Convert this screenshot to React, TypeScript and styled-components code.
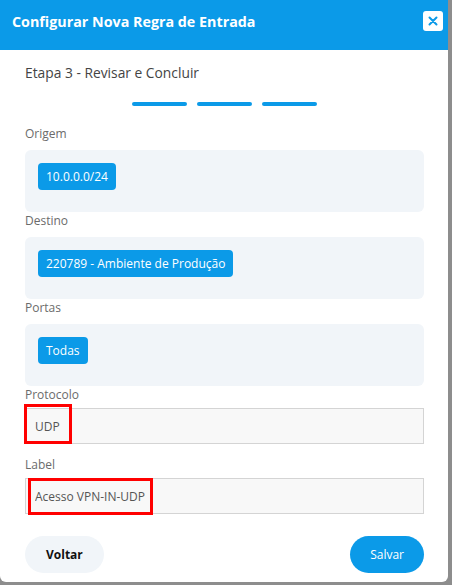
import React from 'react';
import styled, { createGlobalStyle } from 'styled-components';

const blue = '#0b9ae8';

const GlobalStyle = createGlobalStyle`
  html, body {
    margin: 0;
    padding: 0;
    background: #8d8d8d;
    font-family: 'Open Sans', 'Noto Sans', Arial, sans-serif;
  }
  * {
    box-sizing: border-box;
  }
`;

const StyledModal = styled.div`
  width: 448px;
  height: 582px;
  display: flex;
  flex-direction: column;
  background: #fff;
  border-radius: 0 0 6px 6px;
  overflow: hidden;
`;

const StyledHeader = styled.header`
  height: 50px;
  flex-shrink: 0;
  display: flex;
  align-items: center;
  justify-content: space-between;
  padding: 0 5px 8px 12px;
  background: ${blue};
`;

const StyledTitle = styled.h2`
  margin: 0;
  font-size: 14.3px;
  font-weight: 700;
  color: #fff;
`;

const CloseButton = styled.button`
  width: 20px;
  height: 20px;
  display: flex;
  align-items: center;
  justify-content: center;
  padding: 0;
  border: none;
  border-radius: 3px;
  background: #fff;
  color: ${blue};
  cursor: pointer;
`;

const StyledBody = styled.div`
  flex: 1;
  display: flex;
  flex-direction: column;
  padding: 0 24px 0 25px;
`;

const StepTitle = styled.h3`
  margin: 13px 0 0;
  font-size: 13.8px;
  line-height: 20px;
  font-weight: 500;
  color: #444;
`;

const Stepper = styled.div`
  display: flex;
  justify-content: center;
  gap: 10px;
  margin: 19px 0 19px;
`;

const StepBar = styled.span`
  width: 55px;
  height: 4px;
  border-radius: 2px;
  background: ${blue};
`;

const Field = styled.div<{ $spaced?: boolean }>`
  display: flex;
  flex-direction: column;
  margin-top: ${p => (p.$spaced ? '12px' : '0')};
`;

const FieldLabel = styled.label<{ $gap: number }>`
  font-size: 12px;
  line-height: 18px;
  color: #6b6b6b;
  margin-bottom: ${p => p.$gap}px;
`;

const ChipBox = styled.div`
  height: 62px;
  display: flex;
  align-items: flex-start;
  padding: 13px;
  background: #f1f5f9;
  border-radius: 6px;
`;

const Chip = styled.span`
  height: 27px;
  display: inline-flex;
  align-items: center;
  padding: 0 8px;
  background: ${blue};
  border-radius: 4px;
  font-size: 12px;
  color: #fff;
`;

const InputWrap = styled.div`
  position: relative;
`;

const StyledInput = styled.input`
  width: 100%;
  height: 36px;
  padding: 0 9px;
  background: #f8f8f8;
  border: 1px solid #d4d4d4;
  font-family: inherit;
  font-size: 12px;
  color: #555;
  outline: none;
`;

// red highlight frame drawn over a field
const Highlight = styled.span<{ $left: number; $top: number; $w: number; $h: number }>`
  position: absolute;
  left: ${p => p.$left}px;
  top: ${p => p.$top}px;
  width: ${p => p.$w}px;
  height: ${p => p.$h}px;
  border: 3px solid #ff0000;
  pointer-events: none;
`;

const StyledFooter = styled.div`
  display: flex;
  justify-content: space-between;
  margin-top: 22px;
`;

const FooterButton = styled.button<{ $primary?: boolean }>`
  height: 37px;
  padding: 0 ${p => (p.$primary ? '20px' : '21px')};
  border: none;
  border-radius: 18.5px;
  background: ${p => (p.$primary ? blue : '#f1f5f9')};
  color: ${p => (p.$primary ? '#fff' : '#111')};
  font-family: inherit;
  font-size: 12px;
  font-weight: ${p => (p.$primary ? 500 : 700)};
  cursor: pointer;
`;

const chipFields = [
  { label: 'Origem', value: '10.0.0.0/24' },
  { label: 'Destino', value: '220789 - Ambiente de Produção' },
  { label: 'Portas', value: 'Todas' },
];

const App: React.FC = () => (
  <>
    <GlobalStyle />
    <StyledModal>
      <StyledHeader>
        <StyledTitle>Configurar Nova Regra de Entrada</StyledTitle>
        <CloseButton aria-label="Fechar">
          <svg width="10" height="10" viewBox="0 0 10 10">
            <path d="M1.5 1.5 8.5 8.5M8.5 1.5 1.5 8.5" stroke="currentColor" strokeWidth="2" strokeLinecap="round" />
          </svg>
        </CloseButton>
      </StyledHeader>
      <StyledBody>
        <StepTitle>Etapa 3 - Revisar e Concluir</StepTitle>
        <Stepper>
          <StepBar />
          <StepBar />
          <StepBar />
        </Stepper>
        {chipFields.map(f => (
          <Field key={f.label}>
            <FieldLabel $gap={7}>{f.label}</FieldLabel>
            <ChipBox>
              <Chip>{f.value}</Chip>
            </ChipBox>
          </Field>
        ))}
        <Field>
          <FieldLabel $gap={4}>Protocolo</FieldLabel>
          <InputWrap>
            <StyledInput readOnly value="UDP" />
            <Highlight $left={-1} $top={-4} $w={48} $h={40} />
          </InputWrap>
        </Field>
        <Field $spaced>
          <FieldLabel $gap={4}>Label</FieldLabel>
          <InputWrap>
            <StyledInput readOnly value="Acesso VPN-IN-UDP" />
            <Highlight $left={3} $top={0} $w={125} $h={37} />
          </InputWrap>
        </Field>
        <StyledFooter>
          <FooterButton>Voltar</FooterButton>
          <FooterButton $primary>Salvar</FooterButton>
        </StyledFooter>
      </StyledBody>
    </StyledModal>
  </>
);

export default App;
